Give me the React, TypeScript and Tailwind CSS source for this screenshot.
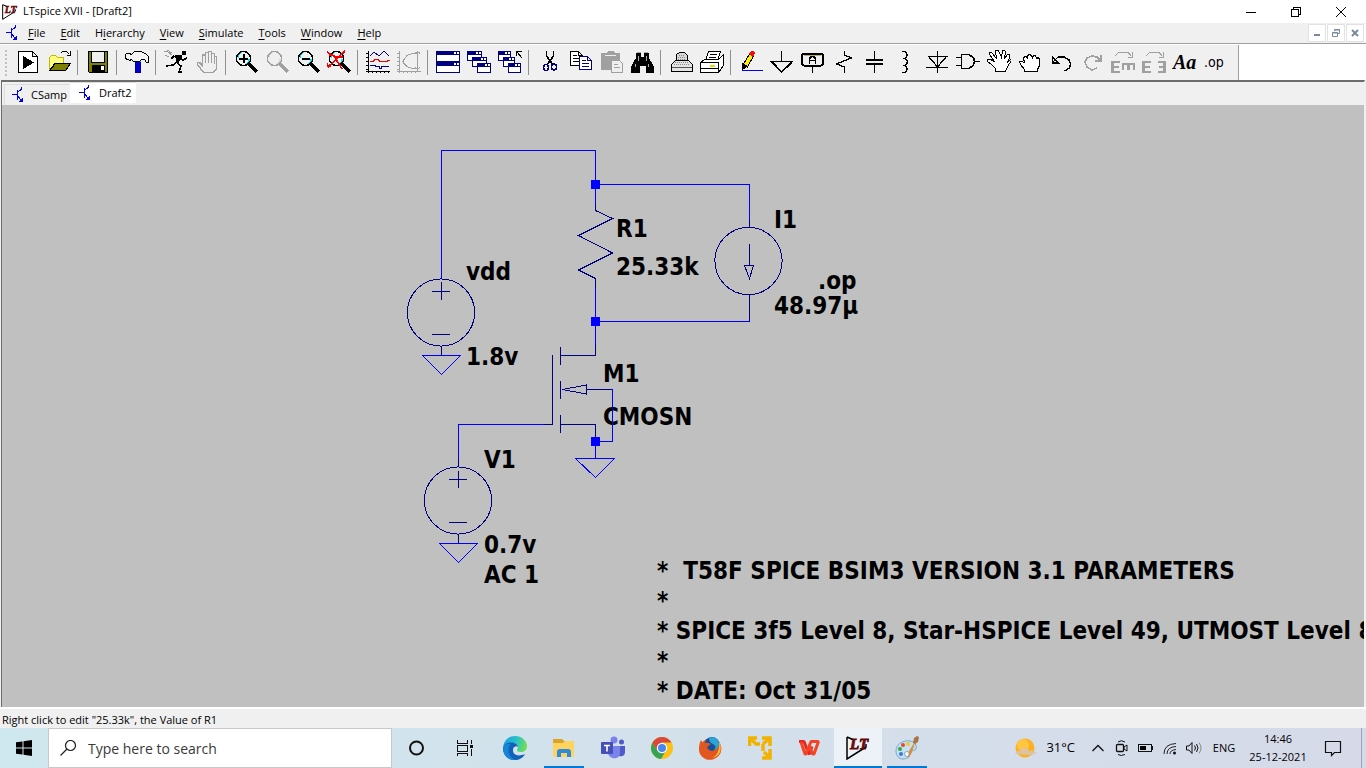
import React from "react";

type Kids = { children: React.ReactNode };

const Pix = ({ children }: Kids) => (
  <svg viewBox="0 0 24 24" className="h-6 w-6" fill="none" stroke="#000" shapeRendering="crispEdges" aria-hidden="true">
    {children}
  </svg>
);

const Lens = ({ color = "#000", glint = "#00e5ee", children }: { color?: string; glint?: string; children?: React.ReactNode }) => (
  <Pix>
    <circle cx="9.5" cy="8.5" r="7" fill="#efefef" stroke={color} strokeWidth="1.3" />
    <path d="M4.500 8V5.500l3-3M12 14l3-3V9" stroke={glint} strokeWidth="1.300" />
    <path d="M15 14l8 8" stroke={color} strokeWidth="3" />
    {children}
  </Pix>
);

const Win = ({ x, y, w, h }: { x: number; y: number; w: number; h: number }) => (
  <g>
    <rect x={x + 0.5} y={y + 0.5} width={w - 1} height={h - 1} fill="#fff" stroke="#000080" />
    <rect x={x} y={y} width={w} height="4" fill="#000080" stroke="none" />
    <rect x={x + w - 3} y={y + 1} width="2" height="2" fill="#fff" stroke="none" />
    <rect x={x + w - 6} y={y + 1} width="2" height="2" fill="#fff" stroke="none" />
  </g>
);

const G = "#a0a0a0";

const tools: ([string, React.ReactNode] | null)[] = [
  ["New schematic", <Pix key="i"><path d="M2.500 1.500h14l5 5v16h-19zM16.500 1.500v5h5" fill="#fff" /><path d="M7 6l11 6.500-11 6.500z" fill="#000" stroke="none" /></Pix>],
  ["Open", <Pix key="i"><path d="M2.500 20.500v-13l2-2h4l2 2h6v5" fill="#ffff80" stroke="#c8b400" /><path d="M8.500 13.500h15l-5 7h-16z" fill="#808000" /><path d="M3 20L8 13" /><path d="M13.500 3.500l2-2h4l3 3M23.500 1v4h-4" /></Pix>],
  null,
  ["Save", <Pix key="i"><path d="M2.500 1.500h19v21h-18l-1-1z" fill="#808000" /><rect x="5.500" y="1.500" width="13" height="11" fill="#efefef" /><rect x="6" y="15" width="13" height="7" fill="#000" stroke="none" /><rect x="15" y="16" width="3" height="4" fill="#fff" stroke="none" /></Pix>],
  null,
  ["Control panel", <Pix key="i"><path d="M10.500 9v13.500h5V9" fill="#0000d0" stroke="#0000a0" /><path d="M10 11.500h6" stroke="#00c8d8" /><path d="M.5 7.500v-3l1-1h3l2 1 3-3h6l5 2 3 3v6h-2l-2-3h-3l-2 2h-6l-2-2-2 1-1-1h-2z" fill="#f4f4f4" /></Pix>],
  null,
  ["Run", <Pix key="i"><path d="M18.500 1.500h3v3h-3z" fill="#000" /><path d="M11 6l5-1 2 1-4 7z" fill="#000" /><path d="M10 6l-3 3M17 9l2 1 4-2M13 12l-4 3-7 1M13 13l4 3-2 6h3" strokeWidth="1.500" /><path d="M0 1l4 1 4 3M3 0l5 3M1 5l4 2" stroke="#999" /></Pix>],
  ["Halt", <Pix key="i"><path d="M8.500 22.500l-6-8v-2h2l3 3V5.500l1-1h1l1 1v7V2.500h3v10V1.500h3v11V3.500h3v10V6.500h2v12l-3 4z" fill="#efefef" stroke={G} strokeWidth="1.500" /></Pix>],
  null,
  ["Zoom in", <Lens key="i"><path d="M5 8.500h9M9.500 4v9" strokeWidth="2" /></Lens>],
  ["Pan", <Lens key="i" color={G} glint="#d8d8d8" />],
  ["Zoom back", <Lens key="i"><path d="M5.500 8.500h8" strokeWidth="2" /></Lens>],
  ["Zoom to fit", <Lens key="i"><path d="M0 2l7 4 8 13M18 1L1 17M0 13v3h4M2 5h4M8 7h8" stroke="#f00000" strokeWidth="1.600" /></Lens>],
  null,
  ["Autorange", <Pix key="i"><path d="M2.500 1v22M0 3.500h2M0 7.500h2M0 11.500h2M0 15.500h2M0 19.500h2M0 21.500h24M6.500 21v2M10.500 21v2M14.500 21v2M18.500 21v2M22.500 21v2" /><path d="M4 6l4-4 5 4 5-5 5 5M4 15.500h5v1h4v2h2v-2h8" stroke="#000080" /><path d="M4 11.500h3l2-2h3l2 2h7l1-1h2" stroke="#f00000" strokeWidth="1.500" /></Pix>],
  ["FFT", <Pix key="i"><path d="M2.500 1v22M0 3.500h2M0 7.500h2M0 11.500h2M0 15.500h2M0 19.500h2M0 21.500h24M6.500 21v2M10.500 21v2M14.500 21v2M18.500 21v2M20.500 1v20M18 3.500l2.500-2 2.500 2M18 17l2.500 2 2.500-2M20 3.500h-5l-5 2-3 4-1 2 1 2 3 3 5 2h5" stroke={G} /></Pix>],
  null,
  ["Tile windows", <Pix key="i"><Win x={0} y={1} w={24} h={11} /><Win x={0} y={12} w={24} h={11} /></Pix>],
  ["Cascade windows", <Pix key="i"><Win x={0} y={1} w={15} h={10} /><Win x={5} y={7} w={15} h={10} /><Win x={10} y={13} w={14} h={10} /></Pix>],
  ["Close all windows", <Pix key="i"><Win x={0} y={1} w={13} h={10} /><Win x={5} y={7} w={12} h={10} /><Win x={10} y={13} w={13} h={10} /><path d="M18.500 6V1.500H24M19 2l5 6" /></Pix>],
  null,
  ["Cut", <Pix key="i"><path d="M9.500 1v5l6 8M16.500 1v5l-6 8" strokeWidth="1.500" /><ellipse cx="9" cy="17.500" rx="2.500" ry="3" stroke="#000080" strokeWidth="1.500" /><ellipse cx="17" cy="17" rx="2.500" ry="3" stroke="#000080" strokeWidth="1.500" /></Pix>],
  ["Copy", <Pix key="i"><path d="M2.500 1.500h8l4 4v10h-12zM10.500 1.500v4h4M5 5.500h4M5 8.500h7M5 11.500h7" fill="#fff" /><path d="M11.500 6.500h8l4 4v9h-12zM19.500 6.500v4h4M14 10.500h4M14 13.500h7M14 16.500h7" fill="#fff" stroke="#000080" /></Pix>],
  ["Paste", <Pix key="i"><path d="M2 3h5l2-2h5l2 2h5v17H2z" fill={G} stroke="none" /><path d="M6 5.500h11" stroke="#efefef" /><path d="M12.500 10.500h8l3 3v9h-11zM15 14.500h4M15 17.500h6" fill="#efefef" stroke={G} /></Pix>],
  ["Find", <Pix key="i"><path d="M6 3h5v4h3V3h5v5l3 5 2 4v6h-8v-7h-6v7H1v-6l2-4 3-5z" fill="#000" stroke="none" /><path d="M7 2h4M14 2h4M8 6v5M16 6v5M5 14v3M18 14v3" stroke="#aaa" /></Pix>],
  null,
  ["Print", <Pix key="i"><path d="M7.500 11V4.500l3-2h5l3 3V11" fill="#d8d8d8" /><path d="M2.500 14.500l4-4h13l4 4v7h-21z" fill="#e4e4e4" /><path d="M10 5.500h6M9 7.500h8M9 9.500h8M6 12.500h14M5 14.500h16" stroke="#888" strokeDasharray="1 1" /><path d="M3 17.500h20" stroke="#555" /></Pix>],
  ["Print setup", <Pix key="i"><path d="M5.500 10.500l3-9h12l-3 9z" fill="#fff" /><path d="M10 4.500h7M9 7.500h7" /><path d="M.5 12.500l4-3h14l5-5v11l-5 7H.5zM1 12.500h18M18.500 12v10" fill="#fff" /><path d="M1 18.500h17" /><path d="M10 16h5" stroke="#e8d800" strokeWidth="2" /></Pix>],
  null,
  ["Wire", <Pix key="i"><path d="M4.500 14l6-10 4 2-6 11z" fill="#ffee00" /><path d="M10 4l2-3h3l1 2-2 4z" fill="#f01010" stroke="none" /><path d="M3 13v7l5-4z" fill="#000" /><path d="M3 20.500h21" stroke="#00f" /></Pix>],
  ["Ground", <Pix key="i"><path d="M11.500 1v10" /><path d="M0 11.500h23M2 12l9.500 10L22 12" strokeWidth="1.800" /></Pix>],
  ["Label net", <Pix key="i"><rect x="1" y="3.500" width="21" height="12" rx="2" strokeWidth="2" /><path d="M3 5.500h17" stroke="#b8b060" /><path d="M8.500 14V8.500l2-2h2l2 2V14M9 10.500h5" strokeWidth="1.500" /><path d="M11.500 16v7" /></Pix>],
  ["Resistor", <Pix key="i"><path d="M12.500 1v4l7 3-15 6 8 3v6" strokeWidth="1.300" /></Pix>],
  ["Capacitor", <Pix key="i"><path d="M11.500 1v8M11.500 15v8" /><path d="M3 10h17M3 14h17" strokeWidth="2" /></Pix>],
  ["Inductor", <Pix key="i"><path d="M8 1.500h3q4 3 0 7H9h2q5 3 0 7H9h2q4 3 0 7H8" strokeWidth="1.500" /></Pix>],
  ["Diode", <Pix key="i"><path d="M12.500 1v22M3 6.500h20M4 7l8.500 10L21 7M1 17.500h22" strokeWidth="1.300" /></Pix>],
  ["Component", <Pix key="i"><path d="M5.500 4.500h7l5 3 1 4-1 4-5 3h-7zM0 7.500h5M0 15.500h5M19 11.500h5" strokeWidth="1.500" /></Pix>],
  ["Move", <Pix key="i"><path d="M8.500 21.500v-3l-4-4-4-3v-2h3l4 2-5-7v-2h2l5 6-1-8h3l3 7 1-7h2l1 1-1 7 3-4h2v3l-2 5 3-3 1 1-4 6-2 5z" fill="#fff" /></Pix>],
  ["Drag", <Pix key="i"><path d="M6.500 21.500v-2l-4-5-1-3h2l3 1-1-4 1-2h2l1 2V5.500l2-1 2 1 1 2 1-2h2l1 3 2-1 1 2v6l-2 4v2z" fill="#fff" /></Pix>],
  ["Undo", <Pix key="i"><path d="M3.500 7v6h6zM4 12l5-5h6l5 3 1.500 4-1 4-5 3" strokeWidth="1.400" /></Pix>],
  ["Redo", <Pix key="i"><path d="M21 5v6h-6M20 10l-3-3-5-1-5 2-2 4 2 5 5 3 5-2" stroke={G} strokeWidth="1.600" /></Pix>],
  ["Rotate", <Pix key="i"><path d="M1.500 11v12M1 12h8M1 17h7M1 22h8" stroke={G} strokeWidth="2.500" /><path d="M11 14h13M12 14v6M17.500 14v6M23 14v6" stroke={G} strokeWidth="2.200" /><path d="M4 6l4-4h9l3 4M21 2v5h-4" stroke={G} /></Pix>],
  ["Mirror", <Pix key="i"><path d="M1.500 11v12M1 12h8M1 17h7M1 22h8M22.500 11v12M24 12h-8M24 17h-7M24 22h-8" stroke={G} strokeWidth="2.500" /><path d="M4 6l4-4h9l3 4M21 2v5h-4" stroke={G} /></Pix>],
  ["Text", <span key="i" className="font-['Liberation_Serif',serif] text-xl leading-6 font-bold italic">Aa</span>],
  ["SPICE directive", <span key="i" className="font-['DejaVu_Sans_Condensed',sans-serif] text-sm leading-5">.op</span>],
];

const menus = [["", "F", "ile"], ["", "E", "dit"], ["H", "i", "erarchy"], ["", "V", "iew"], ["", "S", "imulate"], ["", "T", "ools"], ["", "W", "indow"], ["", "H", "elp"]];

const Logo = ({ className }: { className: string }) => (
  <svg viewBox="0 0 24 24" className={className} aria-hidden="true">
    <path d="M1 1v22L20 11V8M1 1l7 3" fill="none" stroke="#000" strokeWidth="1.500" />
    <text x="4" y="13" fontSize="15" fontWeight="700" fontStyle="italic" fill="#7c0a0a" stroke="#5a0808" strokeWidth=".8" fontFamily="Liberation Serif, serif">LT</text>
  </svg>
);

const Transistor = ({ className }: { className: string }) => (
  <svg viewBox="0 0 12 16" className={className} fill="none" stroke="#0000f0" shapeRendering="crispEdges" aria-hidden="true">
    <path d="M0 7.500h5M9.500 0v2l-4 3.500M5.500 9l5 5.500" /><path d="M5.500 3v10" strokeWidth="1" /><path d="M10.500 15v-4l-4 4z" fill="#0000f0" stroke="none" />
  </svg>
);

const Schematic = () => (
  <svg viewBox="2 105 1362 602" className="absolute top-0 left-0 h-[602px] w-[1362px]" fill="none" shapeRendering="crispEdges" aria-label="Common source amplifier schematic">
    <g stroke="#0000ff">
      <path d="M441.500 278V150.500H595.500V210M595.500 184.500H749.500V220M595.500 279V347M595.500 321.500H749.500M552 424.500H458.500V460M612 389.500h.5v52H595.500M595.500 432V458" />
      <path d="M422.500 355.500h38l-19 19zM575.500 458.500h39l-19 19zM439.500 543.500h38l-19 19z" />
    </g>
    <g stroke="#000080">
      <circle cx="441" cy="312.500" r="33.600" /><circle cx="458" cy="500.500" r="33.600" /><circle cx="748.500" cy="261" r="33.600" />
      <path d="M432 291.500h18M441.500 282v18M432 334.500h18M441.500 347v8M449 479.500h18M458.500 471v17M449 522.500h18M458.500 534v9M458.500 458v9" />
      <path d="M595.500 205v5.500l17 8-34 17 34 17.500-34 17 17 8.500v8M595.500 345v10.500H560M749.500 220v7M749.500 244v21M744.500 265.500h9l-4 13zM749.500 295v26" />
      <path d="M552.500 355v69.500H544M560.500 347v18M560.500 381v18M560.500 415v18M560.500 424.500h35V438M562 389.500l24.500-4.500v9zM586 389.500h26" />
    </g>
    <path d="M591 180h9v9h-9zM591 317h9v9h-9zM591 437h9v9h-9z" fill="#0000ff" />
  </svg>
);

const labels: [string, string][] = [
  ["vdd", "left-[464px] top-[155px]"],
  ["1.8v", "left-[464px] top-[240px]"],
  ["R1", "left-[614px] top-[112px]"],
  ["25.33k", "left-[614px] top-[150px]"],
  ["I1", "left-[772px] top-[103px]"],
  [".op", "left-[816px] top-[164px]"],
  ["48.97µ", "left-[772px] top-[189px]"],
  ["M1", "left-[601px] top-[257px]"],
  ["CMOSN", "left-[601px] top-[300px]"],
  ["V1", "left-[482px] top-[343px]"],
  ["0.7v", "left-[482px] top-[428px]"],
  ["AC 1", "left-[482px] top-[458px]"],
];

const apps: [string, React.ReactNode, string][] = [
  ["Cortana", <svg key="i" viewBox="0 0 24 24" className="h-6 w-6"><circle cx="11.500" cy="12" r="6.500" fill="none" stroke="#111" strokeWidth="2" /></svg>, ""],
  ["Task View", <svg key="i" viewBox="0 0 24 24" className="h-6 w-6" fill="none" stroke="#111" shapeRendering="crispEdges"><path d="M3.500 4v3h10V4M3.500 20v-2.500h10V20M3.500 9.500h10v6h-10zM17.500 4v4M17.500 13v7" /><path d="M16 9h3v3h-3z" fill="#111" stroke="none" /></svg>, ""],
  ["Edge", <svg key="i" viewBox="0 0 24 24" className="h-6 w-6">
    <defs><linearGradient id="eg" x1="0" x2="1" y1=".3" y2=".5"><stop stopColor="#1b9de2" /><stop offset=".55" stopColor="#2cc3c8" /><stop offset="1" stopColor="#6fe04b" /></linearGradient></defs>
    <path d="M0 11C1 4 6 0 12 0c7 0 12 5 12 10 0 4-3 6-6 6-3 0-4-1-4-2 0-.7 1-1.300 1-3 0-2-2-4-6-4-4 0-7 1.500-9 4z" fill="url(#eg)" />
    <path d="M0 12C1 8 5 6 8 6.500c4 0 7 2 7 4.500-1-1.500-5-1-5 3 0 5 5 7 12 4-2 4-6 6-10 6C5 24 0 19 0 12z" fill="#0f62b8" />
    <path d="M8 8c-4 3-4 13 5 16-8 1-13-5-13-12 1-3 4-5 8-4z" fill="#1684d8" />
  </svg>, ""],
  ["File Explorer", <svg key="i" viewBox="0 0 24 24" className="h-6 w-6"><path d="M1 3h9l2 2h10v4H1z" fill="#dca326" /><path d="M1 7h10l2-2h9v16H1z" fill="#ffd45e" /><path d="M5 21v-5q0-3 3-3h8q3 0 3 3v5h-4v-4H9v4z" fill="#2f8ad8" /></svg>, "running"],
  ["Teams", <svg key="i" viewBox="0 0 24 24" className="h-6 w-6"><circle cx="20.500" cy="6" r="2.500" fill="#5059c9" /><path d="M17 10h7v6c0 5-6 5-7 3z" fill="#5059c9" /><circle cx="13" cy="4" r="3.500" fill="#7b83eb" /><path d="M7 10h12v7c0 7-11 7-12 0z" fill="#7b83eb" /><rect x="0" y="6" width="12" height="12" rx="1" fill="#464eb8" /><path d="M3 9.500h6M6 9v6.500" stroke="#fff" strokeWidth="1.600" /></svg>, ""],
  ["Chrome", <svg key="i" viewBox="0 0 24 24" className="h-6 w-6"><circle cx="12" cy="12" r="11" fill="#fbc116" /><path d="M2.500 6.500A11 11 0 0 0 11 23l5.500-9.500L12 17l-5-3z" fill="#36a353" /><path d="M2.500 6.500A11 11 0 0 1 21.500 6.500H12L7 14z" fill="#d9483b" /><circle cx="12" cy="12" r="5.200" fill="#fff" /><circle cx="12" cy="12" r="4" fill="#4687ee" /></svg>, ""],
  ["Firefox", <svg key="i" viewBox="0 0 24 24" className="h-6 w-6"><circle cx="12" cy="12.500" r="10.500" fill="#e2601d" /><circle cx="13" cy="8.500" r="7.500" fill="#174f9c" /><path d="M10 2c4-2 10 0 10 6 0 4-2 6-5 6 2-2 2-4-1-6-3-1-4-3-4-6z" fill="#2ba4d8" /><path d="M2 4c1 2 2 3 4 3 2-.5 4 0 6 1l-4 3c1 4 6 5 9 2 2-1 3-3 3-5 4 5 1 11-3 14-8 5-18-1-17-10 0-3 1-6 2-8z" fill="#e2571d" /><path d="M20 5c4 8 1 16-7 17 5-2 8-8 7-17z" fill="#fcb53a" /></svg>, ""],
  ["VMware", <svg key="i" viewBox="0 0 24 24" className="h-6 w-6" fill="none" stroke="#f2b300" strokeWidth="3.500"><path d="M1.500 10V2H9M2 2l6 6h4M14 2h8v8M22 2l-7 6M22 13v9h-8M22 22l-6-6M15 8v7" /></svg>, ""],
  ["WPS Office", <svg key="i" viewBox="0 0 24 24" className="h-6 w-6" fill="none" strokeWidth="3"><path d="M2 5.500h5l5 13 3-8" stroke="#e8271d" strokeLinejoin="bevel" /><path d="M4 6l4 12h1l5-12.500h7.500L17 18h-1.500l-3-8" stroke="#f34525" strokeLinejoin="bevel" /></svg>, ""],
  ["LTspice XVII", <Logo key="i" className="h-6 w-6" />, "active"],
  ["Paint", <svg key="i" viewBox="0 0 24 24" className="h-6 w-6"><path d="M1 15C1 8 8 4 15 5c5 1 7 4 6 8-1 2-4 1-5 3-1 4-3 7-8 7-4 0-7-3-7-8z" fill="#c5e0f2" stroke="#78a9cc" /><circle cx="5" cy="13" r="2" fill="#3aa44a" /><circle cx="8" cy="9" r="2" fill="#e54832" /><circle cx="13" cy="8" r="2" fill="#f7c531" /><circle cx="6" cy="18" r="2" fill="#3b78d4" /><circle cx="12" cy="18" r="2.500" fill="#f7fbff" stroke="#78a9cc" /><path d="M21 4l-4 12-4 7 1-8z" fill="#d58d3b" /><path d="M18 7l1-5 3-2 2 1-1 5-3 2z" fill="#a97546" /></svg>, "running"],
];

const tray = "flex shrink-0 items-center justify-center";
const child = "flex h-[18px] w-[18px] items-center justify-center border border-[#e2e2e2] bg-white";

export default function App() {
  return (
    <div className="flex h-screen min-h-[480px] flex-col overflow-hidden bg-[#f0f0f0] font-['Open_Sans','Noto_Sans',sans-serif] text-[11px] text-black">
      <header className="flex h-[23px] shrink-0 items-center bg-white pl-[2px]">
        <Logo className="h-4 w-4" />
        <h1 className="ml-[5px] grow font-normal">LTspice XVII - [Draft2]</h1>
        <button aria-label="Minimize" className="flex h-5 w-[45px] items-center justify-center"><svg viewBox="0 0 10 10" className="h-[10px] w-[10px]" stroke="#000" shapeRendering="crispEdges"><path d="M0 5.500h10" /></svg></button>
        <button aria-label="Restore" className="flex h-5 w-[45px] items-center justify-center"><svg viewBox="0 0 10 10" className="h-[10px] w-[10px]" stroke="#000" fill="none" shapeRendering="crispEdges"><path d="M.5 2.500h7v7h-7zM2.500 2V.5h7v7H8" /></svg></button>
        <button aria-label="Close" className="mr-[3px] flex h-5 w-[45px] items-center justify-center"><svg viewBox="0 0 10 10" className="h-[10px] w-[10px]" stroke="#000"><path d="M0 0l10 10M10 0L0 10" /></svg></button>
      </header>

      <div className="flex h-5 shrink-0 items-center pl-[6px]">
        <Transistor className="h-4 w-3" />
        <nav className="ml-[3px] flex grow gap-px">
          {menus.map(([a, b, c]) => (
            <button key={b + c} className="px-[7px]">{a}<u className="underline-offset-2">{b}</u>{c}</button>
          ))}
        </nav>
        <div className="flex gap-px bg-white pr-[2px]">
          <button aria-label="Minimize document" className={child}><svg viewBox="0 0 8 8" className="h-2 w-2" stroke="#7a8a9c" strokeWidth="2"><path d="M1 6h6" /></svg></button>
          <button aria-label="Restore document" className={child}><svg viewBox="0 0 8 8" className="h-2 w-2" stroke="#7a8a9c" fill="none"><path d="M.5 3.500h5v4h-5zM.5 4h5M2.500 2V.5h5v4H6M2.500 1h5" /></svg></button>
          <button aria-label="Close document" className={child}><svg viewBox="0 0 8 8" className="h-2 w-2" stroke="#7a8a9c" strokeWidth="2"><path d="M1 1l6 6M7 1L1 7" /></svg></button>
        </div>
      </div>

      <div className="flex h-[37px] shrink-0 border-t border-[#a0a0a0] bg-white pt-px">
        <div className="flex w-[1239px] shrink-0 border-r border-[#a0a0a0] bg-[#f0f0f0]">
          <div className="mt-[5px] mr-[5px] ml-[5px] h-[27px] w-[2px] shrink-0 bg-[repeating-linear-gradient(#c0c0c0_0_2px,transparent_2px_4px)]" />
          {tools.map((t, i) =>
            t ? (
              <button key={t[0]} aria-label={t[0]} className="flex h-[34px] w-[31px] shrink-0 items-center pl-1">{t[1]}</button>
            ) : (
              <div key={i} className="flex h-[34px] w-2 shrink-0 items-center pl-[3px]"><span className="h-[25px] w-px bg-[#909090]" /></div>
            )
          )}
        </div>
      </div>

      <main className="mx-px flex min-h-0 grow flex-col border-t-2 border-r border-l border-[#6c6c6c] border-r-[#f0f0f0]">
        <div className="flex h-[23px] shrink-0 pl-[2px]" role="tablist">
          <button role="tab" aria-selected="false" className="mt-[2px] flex h-[21px] w-[66px] items-center border-t border-l border-[#dcdcdc] pl-[7px]">
            <Transistor className="h-4 w-3" /><span className="ml-[7px]">CSamp</span>
          </button>
          <button role="tab" aria-selected="true" className="flex h-[21px] w-[66px] items-center border-t border-[#dcdcdc] bg-white pl-[9px]">
            <Transistor className="h-4 w-3" /><span className="ml-2">Draft2</span>
          </button>
        </div>
        <section className="relative min-h-0 grow overflow-hidden bg-[#c0c0c0] font-['DejaVu_Sans_Condensed','Noto_Sans',sans-serif] text-2xl leading-6 font-bold whitespace-pre">
          {labels.map(([text, at]) => <span key={text} className={"absolute " + at}>{text}</span>)}
          <p className="absolute top-[451px] left-[655px] leading-[30px]">{"*  T58F SPICE BSIM3 VERSION 3.1 PARAMETERS\n*\n* SPICE 3f5 Level 8, Star-HSPICE Level 49, UTMOST Level 8\n*\n* DATE: Oct 31/05"}</p>
          <Schematic />
        </section>
      </main>

      <div className="flex h-[21px] shrink-0 items-center border-t-2 border-white pt-[3px] pl-[2px]" role="status">
        Right click to edit "25.33k", the Value of R1
      </div>

      <footer className="flex h-10 shrink-0 items-stretch bg-gradient-to-r from-[#cfe7ee] to-[#d6dae8]">
        <button aria-label="Start" className="flex w-12 items-center justify-center"><svg viewBox="0 0 16 16" className="h-4 w-4"><path d="M0 2.300l6.500-.9v6.100H0zM7.500 1.200L16 0v7.500H7.500zM0 8.500h6.500v6.100L0 13.700zM7.500 8.500H16V16l-8.500-1.200z" /></svg></button>
        <label className="flex w-[344px] items-center border border-[#c8c8c8] bg-white pl-[11px]">
          <svg viewBox="0 0 16 16" className="h-4 w-4" fill="none" stroke="#222" strokeWidth="1.200"><circle cx="10.500" cy="5.500" r="5" /><path d="M7 9l-6.500 6.500" /></svg>
          <input aria-label="Search" placeholder="Type here to search" className="ml-3 w-64 bg-transparent pt-px text-sm outline-none placeholder:text-[#3a3a3a]" />
        </label>
        <div className="flex grow items-stretch gap-px pl-px">
          {apps.map(([name, icon, state]) => (
            <button key={name} aria-label={name} className={state === "active" ? "flex w-12 items-center justify-center border-b-2 border-[#0078d7] bg-[#edf2f9] pt-[2px]" : state === "running" ? "mx-1 flex w-10 items-center justify-center border-b-2 border-[#0078d7] pt-[2px]" : "flex w-12 items-center justify-center"}>{icon}</button>
          ))}
        </div>
        <button className={tray + " mr-[11px] gap-[9px] text-[13px]"}>
          <svg viewBox="0 0 22 20" className="h-5 w-[22px]"><circle cx="10" cy="10" r="9.500" fill="#fdb022" /><circle cx="8" cy="7" r="6" fill="#ffc640" /><path d="M0 16q1-3 5-3 2-4 6-3 3 1 3 3 5-1 8 2-3 2-8 2z" fill="#d9c5ae" opacity=".9" /></svg>
          31°C
        </button>
        <button aria-label="Hidden icons" className={tray + " w-6"}><svg viewBox="0 0 12 8" className="h-2 w-3" fill="none" stroke="#111" strokeWidth="1.300"><path d="M.5 7L6 1.500 11.500 7" /></svg></button>
        <button aria-label="Meet now" className={tray + " w-6"}><svg viewBox="0 0 14 16" className="h-4 w-[14px]" fill="none" stroke="#111"><path d="M3 2q3-2.500 7 0M3 14.500q3 2 7 0" /><rect x="1.500" y="4.500" width="7" height="7" rx="1" strokeWidth="1.300" /><path d="M9 7l3-2v6L9 9z" /></svg></button>
        <button aria-label="Battery" className={tray + " w-6"}><svg viewBox="0 0 16 10" className="h-[10px] w-4" shapeRendering="crispEdges"><path d="M.5 1.500h13v7H.5zM14.500 3v4" fill="none" stroke="#111" /><path d="M2 3h6v4H2z" /></svg></button>
        <button aria-label="Wi-Fi" className={tray + " w-6"}><svg viewBox="0 0 14 14" className="h-[14px] w-[14px]" fill="none" stroke="#222"><path d="M1 13Q1 3 13 2.500M4 13Q4 6 13 5.500M7 13Q7 9 13 8.500" /><circle cx="11.500" cy="12" r="1.500" fill="#111" stroke="none" /></svg></button>
        <button aria-label="Volume" className={tray + " w-6"}><svg viewBox="0 0 16 14" className="h-[14px] w-4" fill="none" stroke="#111"><path d="M.5 5h2.500l3-3.500v11L3 9H.5zM8.500 4.500q2 2.500 0 5M10.500 3q3 4 0 8" /><path d="M13 1.500q4 5.500 0 11" stroke="#888" /></svg></button>
        <button className={tray + " w-9"}>ENG</button>
        <button className={tray + " w-[72px] flex-col leading-[18px]"}><span>14:46</span><span>25-12-2021</span></button>
        <button aria-label="Notifications" className={tray + " mr-[9px] w-[38px]"}><svg viewBox="0 0 18 18" className="h-[18px] w-[18px]" fill="none" stroke="#111" strokeWidth="1.200"><path d="M1.500 2.500h15v11h-6l-3 3v-3h-6z" /></svg></button>
        <button aria-label="Show desktop" className="w-[5px] shrink-0 border-l border-[#9aa6b5]" />
      </footer>
    </div>
  );
}
